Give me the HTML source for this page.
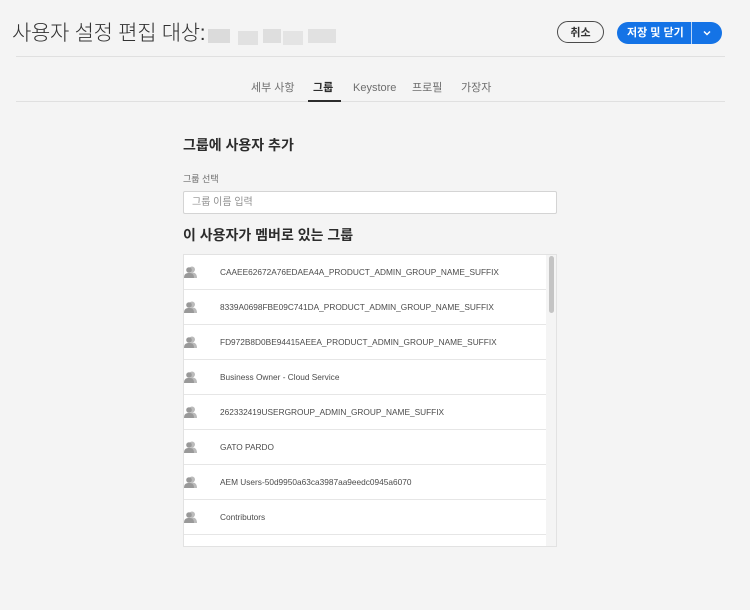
<!DOCTYPE html>
<html><head><meta charset="utf-8"><style>
body{margin:0;width:750px;height:610px;background:#f4f4f4;font-family:"Liberation Sans","Noto Sans CJK KR",sans-serif;position:relative;overflow:hidden;color:#2c2c2c}
.abs{position:absolute}
h1{position:absolute;left:12px;top:20px;margin:0;font-weight:300;font-size:21px;line-height:28px;color:#323232;letter-spacing:-0.3px}
.blur{position:absolute;height:14px;background:#d4d4d4}
.btn{position:absolute;border-radius:13px;font-size:11px;font-weight:bold;display:flex;align-items:center;justify-content:center;box-sizing:border-box}
.tab{position:absolute;top:81px;font-size:11px;line-height:14px;color:#6e6e6e}
.row{position:absolute;left:184px;width:362px;height:34px;border-bottom:1px solid #e6e6e6;background:#fff;font-size:8.3px;color:#4b4b4b}
.row span{position:absolute;left:36px;top:11px;line-height:12px}
.row svg{position:absolute;left:0;top:11px}
</style></head><body>
<h1>사용자 설정 편집 대상:</h1>
<div class="blur" style="left:208px;top:29px;width:22px;opacity:.8"></div>
<div class="blur" style="left:238px;top:31px;width:20px;opacity:.6"></div>
<div class="blur" style="left:263px;top:29px;width:18px;opacity:.7"></div>
<div class="blur" style="left:283px;top:31px;width:20px;opacity:.5"></div>
<div class="blur" style="left:308px;top:29px;width:28px;opacity:.6"></div>
<div class="btn" style="left:557px;top:21px;width:47px;height:22px;border:1.5px solid #4b4b4b;color:#323232">취소</div>
<div class="btn" style="left:617px;top:22px;width:105px;height:22px;background:#1473e6;color:#fff;justify-content:flex-start"><span style="position:absolute;left:10px;top:4px;line-height:14px">저장 및 닫기</span><span style="position:absolute;left:74px;top:0;width:1px;height:22px;background:#fff;opacity:.7"></span><svg style="position:absolute;left:86px;top:8px" width="8" height="6" viewBox="0 0 8 6"><path d="M1 1.5L4 4.5L7 1.5" stroke="#fff" stroke-width="1.5" fill="none"/></svg></div>
<div class="abs" style="left:16px;top:56px;width:709px;height:1px;background:#e0e0e0"></div>
<div class="tab" style="left:251px">세부 사항</div>
<div class="tab" style="left:313px;color:#2c2c2c;font-weight:bold">그룹</div>
<div class="tab" style="left:353px">Keystore</div>
<div class="tab" style="left:412px">프로필</div>
<div class="tab" style="left:461px">가장자</div>
<div class="abs" style="left:16px;top:101px;width:709px;height:1px;background:#e0e0e0"></div>
<div class="abs" style="left:308px;top:100px;width:33px;height:2px;background:#2c2c2c"></div>
<div class="abs" style="left:183px;top:136px;font-size:14px;font-weight:bold;line-height:18px">그룹에 사용자 추가</div>
<div class="abs" style="left:183px;top:173px;font-size:9px;line-height:12px;color:#6e6e6e">그룹 선택</div>
<div class="abs" style="left:183px;top:191px;width:374px;height:23px;box-sizing:border-box;border:1px solid #d4d4d4;background:#fff;border-radius:2px"><span style="position:absolute;left:8px;top:4px;font-size:10px;line-height:13px;color:#8e8e8e">그룹 이름 입력</span></div>
<div class="abs" style="left:183px;top:226px;font-size:14px;font-weight:bold;line-height:18px">이 사용자가 멤버로 있는 그룹</div>
<div class="abs" style="left:183px;top:254px;width:374px;height:293px;background:#fff;border:1px solid #e2e2e2;box-sizing:border-box;overflow:hidden"></div>
<div class="abs" style="left:546px;top:255px;width:10px;height:291px;background:#f4f4f4"></div>
<div class="abs" style="left:549px;top:256px;width:5px;height:57px;background:#c4c4c4;border-radius:3px"></div>
<div class="row" style="top:255px"><svg width="14" height="12" viewBox="0 0 14 12"><circle cx="8" cy="3.5" r="3" fill="#bbb"/><path d="M3 12c0-4 2-5.5 5-5.5s5 1.5 5 5.5z" fill="#bbb"/><circle cx="5" cy="4" r="2.8" fill="#999"/><path d="M0 12c0-4 2-5 5-5s5 1 5 5z" fill="#999"/></svg><span>CAAEE62672A76EDAEA4A_PRODUCT_ADMIN_GROUP_NAME_SUFFIX</span></div>
<div class="row" style="top:290px"><svg width="14" height="12" viewBox="0 0 14 12"><circle cx="8" cy="3.5" r="3" fill="#bbb"/><path d="M3 12c0-4 2-5.5 5-5.5s5 1.5 5 5.5z" fill="#bbb"/><circle cx="5" cy="4" r="2.8" fill="#999"/><path d="M0 12c0-4 2-5 5-5s5 1 5 5z" fill="#999"/></svg><span>8339A0698FBE09C741DA_PRODUCT_ADMIN_GROUP_NAME_SUFFIX</span></div>
<div class="row" style="top:325px"><svg width="14" height="12" viewBox="0 0 14 12"><circle cx="8" cy="3.5" r="3" fill="#bbb"/><path d="M3 12c0-4 2-5.5 5-5.5s5 1.5 5 5.5z" fill="#bbb"/><circle cx="5" cy="4" r="2.8" fill="#999"/><path d="M0 12c0-4 2-5 5-5s5 1 5 5z" fill="#999"/></svg><span>FD972B8D0BE94415AEEA_PRODUCT_ADMIN_GROUP_NAME_SUFFIX</span></div>
<div class="row" style="top:360px"><svg width="14" height="12" viewBox="0 0 14 12"><circle cx="8" cy="3.5" r="3" fill="#bbb"/><path d="M3 12c0-4 2-5.5 5-5.5s5 1.5 5 5.5z" fill="#bbb"/><circle cx="5" cy="4" r="2.8" fill="#999"/><path d="M0 12c0-4 2-5 5-5s5 1 5 5z" fill="#999"/></svg><span>Business Owner - Cloud Service</span></div>
<div class="row" style="top:395px"><svg width="14" height="12" viewBox="0 0 14 12"><circle cx="8" cy="3.5" r="3" fill="#bbb"/><path d="M3 12c0-4 2-5.5 5-5.5s5 1.5 5 5.5z" fill="#bbb"/><circle cx="5" cy="4" r="2.8" fill="#999"/><path d="M0 12c0-4 2-5 5-5s5 1 5 5z" fill="#999"/></svg><span>262332419USERGROUP_ADMIN_GROUP_NAME_SUFFIX</span></div>
<div class="row" style="top:430px"><svg width="14" height="12" viewBox="0 0 14 12"><circle cx="8" cy="3.5" r="3" fill="#bbb"/><path d="M3 12c0-4 2-5.5 5-5.5s5 1.5 5 5.5z" fill="#bbb"/><circle cx="5" cy="4" r="2.8" fill="#999"/><path d="M0 12c0-4 2-5 5-5s5 1 5 5z" fill="#999"/></svg><span>GATO PARDO</span></div>
<div class="row" style="top:465px"><svg width="14" height="12" viewBox="0 0 14 12"><circle cx="8" cy="3.5" r="3" fill="#bbb"/><path d="M3 12c0-4 2-5.5 5-5.5s5 1.5 5 5.5z" fill="#bbb"/><circle cx="5" cy="4" r="2.8" fill="#999"/><path d="M0 12c0-4 2-5 5-5s5 1 5 5z" fill="#999"/></svg><span>AEM Users-50d9950a63ca3987aa9eedc0945a6070</span></div>
<div class="row" style="top:500px"><svg width="14" height="12" viewBox="0 0 14 12"><circle cx="8" cy="3.5" r="3" fill="#bbb"/><path d="M3 12c0-4 2-5.5 5-5.5s5 1.5 5 5.5z" fill="#bbb"/><circle cx="5" cy="4" r="2.8" fill="#999"/><path d="M0 12c0-4 2-5 5-5s5 1 5 5z" fill="#999"/></svg><span>Contributors</span></div>
<div class="row" style="top:535px;height:11px;border:0"></div>
</body></html>
